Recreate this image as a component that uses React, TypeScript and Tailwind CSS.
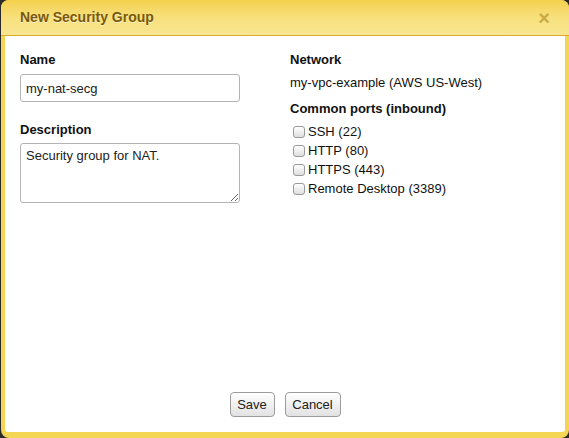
import React from "react";

const font = { fontFamily: '"Liberation Sans", Arial, Helvetica, sans-serif' };

function Check({ label }: { label: string }) {
  return (
    <label className="flex h-[19px] items-center">
      <span className="ml-[3px] h-[12px] w-[12px] rounded-[3px] border border-[#9a9a9a] bg-gradient-to-b from-[#ffffff] to-[#dedede] shadow-[inset_0_1px_0_#fff]" />
      <span className="ml-[3px] text-[13px] leading-[16px] text-[#111]">{label}</span>
    </label>
  );
}

export default function App() {
  return (
    <div className="h-[438px] w-[569px] bg-[#2a2a2a] pl-[1px]" style={font}>
      <div className="flex h-[438px] w-[568px] flex-col overflow-hidden rounded-[8px] bg-[#f5d554]">
        <div className="flex h-[36px] items-center justify-between border-b border-[#d9ac2b] bg-gradient-to-b from-[#f4d04c] via-[#f7e07c] to-[#f8e590] pl-[19px] pr-[19px]">
          <span className="text-[14px] font-bold text-[#7a5a06] [text-shadow:0_1px_0_rgba(255,255,255,0.6)]">
            New Security Group
          </span>
          <span className="text-[20px] font-bold leading-none text-[#c9ab45]">×</span>
        </div>
        <div className="mx-[4px] mb-[6px] flex flex-1 flex-col rounded-b-[3px] bg-white px-[15px] pb-[15px] pt-[16px] text-[13px] leading-[16px] text-[#111]">
          <div className="flex flex-1 gap-[50px]">
            <div className="flex w-[220px] flex-col">
              <div className="font-bold">Name</div>
              <input
                readOnly
                value="my-nat-secg"
                className="mt-[6px] h-[28px] w-[220px] rounded-[3px] border border-[#b4b4b4] px-[5px] text-[13px] text-[#222] outline-none"
                style={font}
              />
              <div className="mt-[20px] font-bold">Description</div>
              <textarea
                readOnly
                value="Security group for NAT."
                className="mt-[5px] h-[60px] w-[220px] resize rounded-[3px] border border-[#b4b4b4] px-[5px] py-[4px] text-[13px] leading-[16px] text-[#222] outline-none"
                style={font}
              />
            </div>
            <div className="flex flex-col">
              <div className="font-bold">Network</div>
              <div className="mt-[7px]">my-vpc-example (AWS US-West)</div>
              <div className="mt-[10px] font-bold">Common ports (inbound)</div>
              <div className="mt-[5px] flex flex-col">
                <Check label="SSH (22)" />
                <Check label="HTTP (80)" />
                <Check label="HTTPS (443)" />
                <Check label="Remote Desktop (3389)" />
              </div>
            </div>
          </div>
          <div className="flex justify-center gap-[10px]">
            <button className="h-[25px] w-[45px] rounded-[4px] border border-[#9c9c9c] bg-gradient-to-b from-[#ffffff] to-[#e2e2e2] text-[13px] text-[#222]" style={font}>
              Save
            </button>
            <button className="h-[25px] w-[56px] rounded-[4px] border border-[#9c9c9c] bg-gradient-to-b from-[#ffffff] to-[#e2e2e2] text-[13px] text-[#222]" style={font}>
              Cancel
            </button>
          </div>
        </div>
      </div>
    </div>
  );
}
